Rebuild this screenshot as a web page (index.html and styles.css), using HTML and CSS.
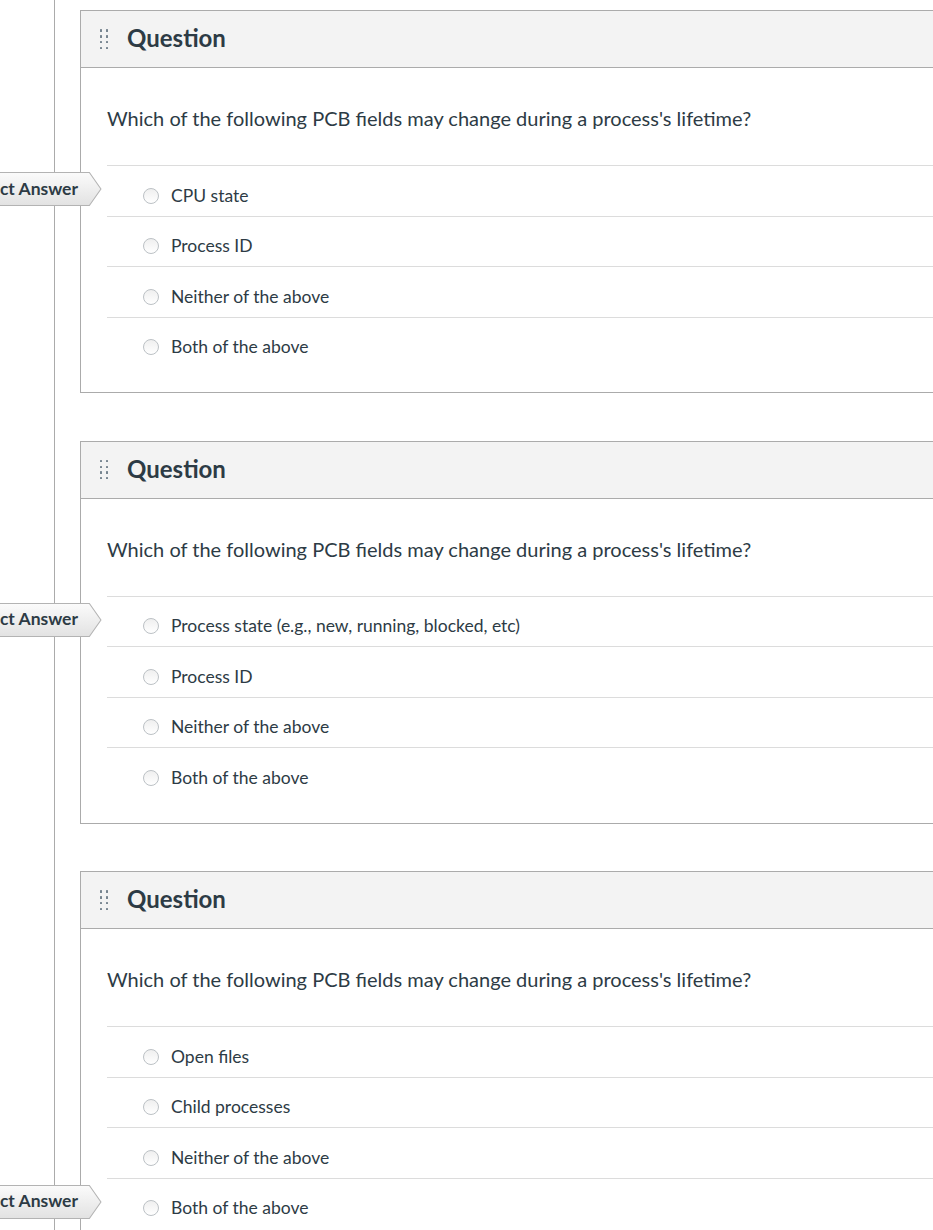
FILE: index.html
```html
<!DOCTYPE html>
<html lang="en">
<head>
<meta charset="utf-8">
<title>Quiz</title>
<link rel="stylesheet" href="styles.css">
</head>
<body>
<div class="rail">
  <div class="quiz">

    <section class="question">
      <header class="q-header">
        <span class="handle"><i></i><i></i><i></i><i></i><i></i><i></i><i></i><i></i></span>
        <h2 class="q-title">Question</h2>
      </header>
      <div class="q-body">
        <p class="q-text">Which of the following PCB fields may change during a process's lifetime?</p>
        <ul class="answers">
          <li class="answer">
            <div class="tag"><svg class="tag-shape" viewBox="0 0 152 34" preserveAspectRatio="none"><defs><linearGradient id="g1" x1="0" y1="0" x2="0" y2="1"><stop offset="0" stop-color="#fbfbfb"/><stop offset="1" stop-color="#e2e2e2"/></linearGradient></defs><polygon points="0.5,0.5 140,0.5 151,17 140,33.5 0.5,33.5" fill="url(#g1)" stroke="#b3b3b3"/></svg><span class="tag-text">Correct Answer</span></div>
            <span class="radio"></span><span class="a-text">CPU state</span>
          </li>
          <li class="answer"><span class="radio"></span><span class="a-text">Process ID</span></li>
          <li class="answer"><span class="radio"></span><span class="a-text">Neither of the above</span></li>
          <li class="answer"><span class="radio"></span><span class="a-text">Both of the above</span></li>
        </ul>
      </div>
    </section>

    <section class="question">
      <header class="q-header">
        <span class="handle"><i></i><i></i><i></i><i></i><i></i><i></i><i></i><i></i></span>
        <h2 class="q-title">Question</h2>
      </header>
      <div class="q-body">
        <p class="q-text">Which of the following PCB fields may change during a process's lifetime?</p>
        <ul class="answers">
          <li class="answer">
            <div class="tag"><svg class="tag-shape" viewBox="0 0 152 34" preserveAspectRatio="none"><defs><linearGradient id="g2" x1="0" y1="0" x2="0" y2="1"><stop offset="0" stop-color="#fbfbfb"/><stop offset="1" stop-color="#e2e2e2"/></linearGradient></defs><polygon points="0.5,0.5 140,0.5 151,17 140,33.5 0.5,33.5" fill="url(#g2)" stroke="#b3b3b3"/></svg><span class="tag-text">Correct Answer</span></div>
            <span class="radio"></span><span class="a-text">Process state (e.g., new, running, blocked, etc)</span>
          </li>
          <li class="answer"><span class="radio"></span><span class="a-text">Process ID</span></li>
          <li class="answer"><span class="radio"></span><span class="a-text">Neither of the above</span></li>
          <li class="answer"><span class="radio"></span><span class="a-text">Both of the above</span></li>
        </ul>
      </div>
    </section>

    <section class="question">
      <header class="q-header">
        <span class="handle"><i></i><i></i><i></i><i></i><i></i><i></i><i></i><i></i></span>
        <h2 class="q-title">Question</h2>
      </header>
      <div class="q-body">
        <p class="q-text">Which of the following PCB fields may change during a process's lifetime?</p>
        <ul class="answers">
          <li class="answer"><span class="radio"></span><span class="a-text">Open files</span></li>
          <li class="answer"><span class="radio"></span><span class="a-text">Child processes</span></li>
          <li class="answer"><span class="radio"></span><span class="a-text">Neither of the above</span></li>
          <li class="answer">
            <div class="tag"><svg class="tag-shape" viewBox="0 0 152 34" preserveAspectRatio="none"><defs><linearGradient id="g3" x1="0" y1="0" x2="0" y2="1"><stop offset="0" stop-color="#fbfbfb"/><stop offset="1" stop-color="#e2e2e2"/></linearGradient></defs><polygon points="0.5,0.5 140,0.5 151,17 140,33.5 0.5,33.5" fill="url(#g3)" stroke="#b3b3b3"/></svg><span class="tag-text">Correct Answer</span></div>
            <span class="radio"></span><span class="a-text">Both of the above</span>
          </li>
        </ul>
      </div>
    </section>

  </div>
</div>
</body>
</html>
```
FILE: styles.css
```css
html, body {
  margin: 0;
  padding: 0;
  background: #fff;
  overflow: hidden;
}
body {
  font-family: Lato, "Open Sans", "Liberation Sans", sans-serif;
  color: #2d3b45;
  width: 933px;
  height: 1230px;
}
.rail {
  margin-left: 54px;
  border-left: 1px solid #ababab;
  padding-left: 25px;
  padding-top: 10px;
  min-height: 1400px;
}
.quiz {
  width: 1000px;
  display: flex;
  flex-direction: column;
  gap: 47.5px;
}
.question {
  border: 1px solid #ababab;
  background: #fff;
}
.q-header {
  height: 56px;
  background: #f3f3f3;
  border-bottom: 1px solid #ababab;
  display: flex;
  align-items: center;
  padding-left: 19px;
}
.handle {
  display: grid;
  grid-template-columns: 2px 2px;
  grid-auto-rows: 2px;
  column-gap: 4px;
  row-gap: 3.7px;
  margin-right: 19px;
  margin-top: 0;
}
.handle i {
  display: block;
  width: 2.4px;
  height: 2.4px;
  background: #76848f;
  border-radius: 0.5px;
}
.q-title {
  margin: 0 0 2px;
  font-size: 24px;
  font-weight: 700;
  color: #2d3b45;
  line-height: 28px;
}
.q-body {
  padding: 37px 0 25px 26px;
}
.q-text {
  margin: 0 0 34px;
  font-size: 20px;
  line-height: 26px;
}
.answers {
  list-style: none;
  margin: 0;
  padding: 0;
}
.answer {
  position: relative;
  height: 49.5px;
  box-sizing: content-box;
  border-top: 1px solid #dcdcdc;
  display: flex;
  align-items: center;
  font-size: 17.5px;
}
.answer > .radio,
.answer > .a-text {
  position: relative;
  top: 5px;
}
.radio {
  width: 14px;
  height: 14px;
  border-radius: 50%;
  border: 1px solid #bcc1c5;
  background: linear-gradient(#efefef, #ffffff);
  margin-left: 36px;
  margin-right: 12px;
  flex: none;
}
.a-text {
  line-height: 20px;
}
.tag {
  position: absolute;
  right: calc(100% + 5px);
  top: 6px;
  width: 160px;
  height: 34px;
  display: flex;
  align-items: center;
  justify-content: flex-end;
  box-sizing: border-box;
  padding-right: 24px;
  padding-bottom: 2px;
}
.tag-shape {
  position: absolute;
  inset: 0;
  width: 100%;
  height: 100%;
}
.tag-text {
  position: relative;
  font-size: 17.5px;
  font-weight: 700;
  color: #2d3b45;
  white-space: nowrap;
}
```
